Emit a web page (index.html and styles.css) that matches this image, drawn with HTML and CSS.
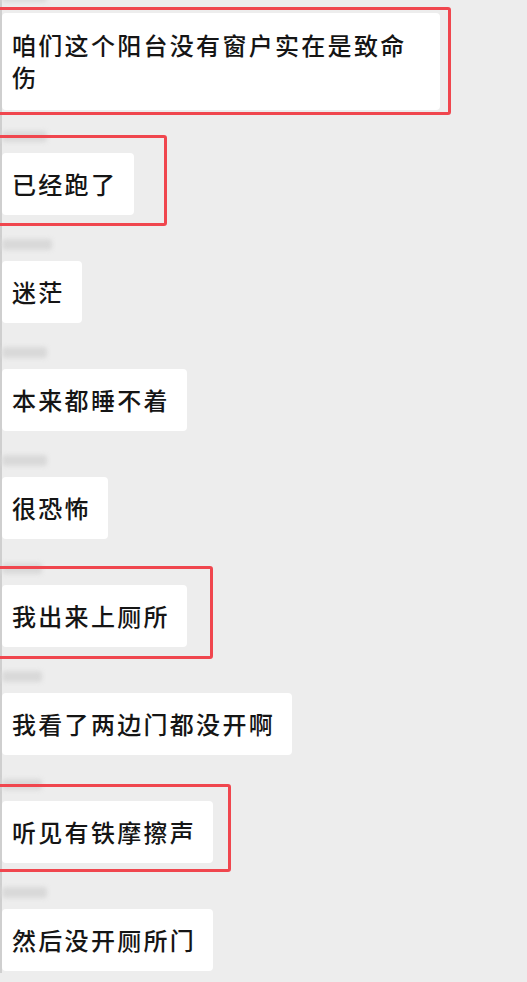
FILE: index.html
```html
<!DOCTYPE html>
<html>

<head>
	<meta charset="UTF-8">
	<title>聊天记录</title>
	<link rel="stylesheet" href="styles.css">
</head>

<body>
	<section class="chat">
		<div class="msg first">
			<div class="name w45"></div>
			<div class="bubble mark mark1">咱们这个阳台没有窗户实在是致命伤</div>
		</div>
		<div class="msg">
			<div class="name w45"></div>
			<div class="bubble mark mark2">已经跑了</div>
		</div>
		<div class="msg">
			<div class="name w50"></div>
			<div class="bubble">迷茫</div>
		</div>
		<div class="msg">
			<div class="name w45"></div>
			<div class="bubble">本来都睡不着</div>
		</div>
		<div class="msg">
			<div class="name w45"></div>
			<div class="bubble">很恐怖</div>
		</div>
		<div class="msg">
			<div class="name w40"></div>
			<div class="bubble mark mark3">我出来上厕所</div>
		</div>
		<div class="msg">
			<div class="name w40"></div>
			<div class="bubble">我看了两边门都没开啊</div>
		</div>
		<div class="msg">
			<div class="name w40"></div>
			<div class="bubble mark mark4">听见有铁摩擦声</div>
		</div>
		<div class="msg">
			<div class="name w45"></div>
			<div class="bubble">然后没开厕所门</div>
		</div>
	</section>
</body>

</html>
```

FILE: styles.css
```css
body {
	margin: 0;
	background-color: #ededed;
	font-family: "Noto Sans CJK SC", "Noto Sans", sans-serif;
	overflow: hidden;
}

.chat {
	min-height: 982px;
	border-left: 2px solid #cfcfcf;
}

.msg {
	margin-bottom: 24px;
}

.msg.first {
	margin-top: -9px;
	margin-bottom: 21px;
}

.name {
	height: 11px;
	margin-bottom: 11px;
	background-color: #d9d9d9;
	border-radius: 3px;
	filter: blur(2px);
}

.w40 {
	width: 40px;
}

.w45 {
	width: 45px;
}

.w50 {
	width: 50px;
}

.bubble {
	position: relative;
	display: inline-block;
	box-sizing: border-box;
	max-width: 438px;
	padding: 15px 17px 15px 10px;
	background-color: #fff;
	border-radius: 4px;
	color: #151515;
	font-size: 24px;
	font-weight: 500;
	line-height: 32px;
	letter-spacing: 2.3px;
}

.msg.first .bubble {
	padding: 16px 17px 17px 10px;
}

/* red marks drawn over the screenshot */
.mark::after {
	content: "";
	position: absolute;
	left: -20px;
	border: 3px solid #f0464e;
	border-radius: 3px;
}

.mark1::after {
	top: -6px;
	bottom: -5px;
	right: -11px;
}

.mark2::after {
	top: -18px;
	bottom: -11px;
	right: -33px;
}

.mark3::after {
	top: -19px;
	bottom: -12px;
	right: -26px;
}

.mark4::after {
	top: -17px;
	bottom: -9px;
	right: -18px;
}
```
